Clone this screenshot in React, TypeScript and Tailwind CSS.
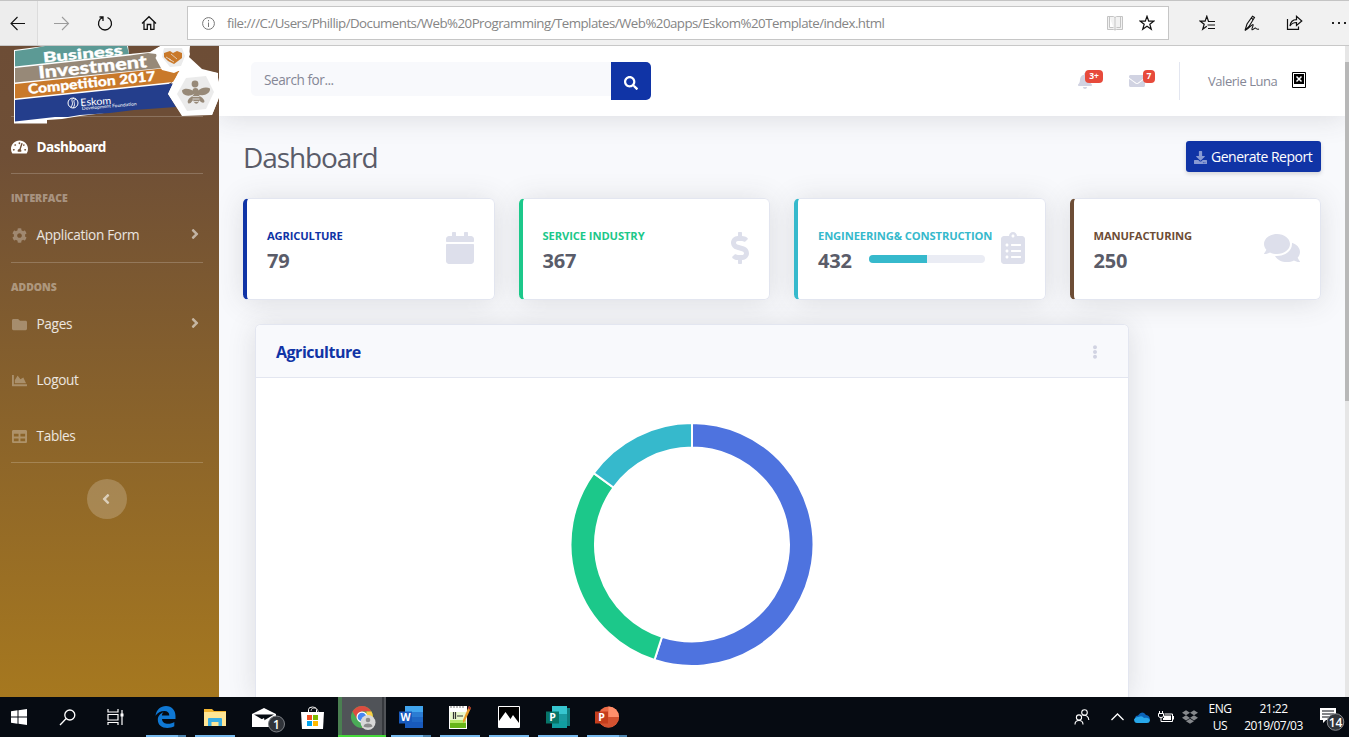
import React from "react";
import {
  FaTachometerAlt, FaCog, FaFolder, FaChartArea, FaTable, FaAngleRight, FaAngleLeft, FaSearch,
  FaBell, FaEnvelope, FaDownload, FaCalendar, FaDollarSign, FaClipboardList, FaComments,
  FaEllipsisV, FaDropbox,
} from "react-icons/fa";

function BrowserBar() {
  return (
    <header className="flex h-[46px] w-full shrink-0 items-center border-t border-b border-t-[#c4c4c4] border-b-[#c8c8c8] bg-[#f1f1f1]">
      <div className="flex h-full w-[38px] items-center border-r border-[#dcdcdc] bg-[#ededed] pl-[10px]">
        <svg width="16" height="16" viewBox="0 0 16 16" fill="none" stroke="#111" strokeWidth="1.1"><path d="M15 8.5H1M7.5 2L1 8.5L7.5 15" /></svg>
      </div>
      <svg className="ml-[15px]" width="17" height="16" viewBox="0 0 17 16" fill="none" stroke="#9c9c9c" strokeWidth="1.1"><path d="M1 8.5H15.500M9 2L15.500 8.5L9 15" /></svg>
      <svg className="ml-[27px]" width="16" height="17" viewBox="0 0 16 17" fill="none" stroke="#111" strokeWidth="1.3"><path d="M5.500 2.500A6.500 6.500 0 1 0 10.500 2.500M2.500 2H6V6" /></svg>
      <svg className="ml-[28px]" width="16" height="16" viewBox="0 0 16 16" fill="none" stroke="#111" strokeWidth="1.3"><path d="M1 8.500L8 1.700L15 8.500M3 7V14.400H6.300V9.500H9.700V14.400H13V7" /></svg>
      <div className="ml-[30px] flex h-[34px] w-[982px] items-center border border-[#c6c6c6] bg-white">
        <svg className="ml-[14px]" width="13" height="13" viewBox="0 0 13 13" fill="none" stroke="#777" strokeWidth="1"><circle cx="6.500" cy="6.500" r="5.900" /><path d="M6.500 5.500V10M6.500 3V4.300" /></svg>
        <span className="ml-[12px] w-[660px] pt-px text-[13.3px] tracking-[-0.53px] whitespace-nowrap text-[#858585]">
          file:///C:/Users/Phillip/Documents/Web%20Programming/Templates/Web%20apps/Eskom%20Template/index.html
        </span>
        <svg className="ml-auto" width="16" height="16" viewBox="0 0 16 16" fill="#f2f2f2" stroke="#c4c4c4" strokeWidth="1"><path d="M.5 1.500H6.500L8 2.500L9.500 1.500H15.500V14.500H9.500L8 15L6.500 14.500H.5ZM8 2.500V15M2.500 2V12.500H6.500M13.500 2V12.500H9.500" /></svg>
        <svg className="mr-[13px] ml-[16px]" width="16" height="16" viewBox="0 0 16 16" fill="none" stroke="#111" strokeWidth="1.2"><path d="M8 1.300L9.700 6.100H15L10.800 9.200L12.300 14.300L8 11.300L3.700 14.300L5.200 9.200L1 6.100H6.300Z" /></svg>
      </div>
      <svg className="ml-[30px]" width="17" height="16" viewBox="0 0 17 16" fill="none" stroke="#111" strokeWidth="1.2"><path d="M16 6.500H9.500L7.800 1.300L6.100 6.100H1L5.200 9.200L3.700 14.300L7.800 11.300M8.500 10H16M9 13.500H16" /></svg>
      <svg className="ml-[28px]" width="16" height="17" viewBox="0 0 16 17" fill="none" stroke="#111" strokeWidth="1.100"><path d="M1 15.500L3 9L8.500 1.200L10.500 2.500L5 11.500L1 15.500M7.500 2.500L9 5M1 15.500C5 14 8 9 9 9.500C10 10.300 7 14 8 14.700C9 15.300 10.500 12.500 11.500 13C12 13.500 12.500 14.800 15 14" /></svg>
      <svg className="ml-[26px]" width="17" height="16" viewBox="0 0 17 16" fill="none" stroke="#111" strokeWidth="1.2"><path d="M1.500 4V14.300H12.500V11.500M4 11C4.500 7 7 4.600 10.500 4.600V1.300L15.800 6L10.500 10.500V7.500C7.500 7.500 5.500 8.500 4 11Z" /></svg>
      <svg className="ml-[28px]" width="17" height="4" viewBox="0 0 17 4" fill="#222"><rect x="1" y="1" width="2" height="2" /><rect x="7" y="1" width="2" height="2" /><rect x="13" y="1" width="2" height="2" /></svg>
    </header>
  );
}

function CompetitionLogo() {
  return (
    <svg className="absolute top-0 left-0" width="219" height="80" viewBox="0 46 219 80" fontFamily="Lato, sans-serif" fontWeight="900" fill="#fff">
      <path d="M14 50L45 46H128L129 54L150 52L160 46H190L189 57L202 69L218 73V100L212 115H183L168 102L120 107L112 112L80 116L62 119L47 120V123.500H14Z" fill="#fff" />
      <path d="M15 51L30 49L45 46H127L129 54L15 66.500Z" fill="#5c9a95" />
      <path d="M129 46H160L150 51L136 52L129 54Z" fill="#6d4d36" />
      <path d="M15 68L130 55.500L148 53L156 54L162 68L15 82.500Z" fill="#978978" />
      <path d="M15 84L162 68.500L180 71L173 82L15 98.500Z" fill="#c9792a" />
      <path d="M172 82L168 94L182 115L130 115L130 106Z" fill="#6d4d36" />
      <path d="M15 100L173 83.500L168 94L176 107L134 110L110 113L80 115L68 117L55 117L15 121.500Z" fill="#243e8c" />
      <path d="M161 46H187L190 54L185 68L174 73L162 70L155.500 58Z" fill="#fff" />
      <path d="M164 48H182L185 56L181 66L170 67L162 57Z" fill="#ebebeb" />
      <path d="M164 53L170 51L173 53L177 51L182 53V58L174 64L168 61L164 57Z" fill="#c9792a" />
      <path d="M166 57L171 60M171 54L177 59M169 59L174 62" stroke="#ebebeb" strokeWidth=".7" />
      <path d="M178 73L189 58L202 70L217 73L219 82V98L212 115L182 116L168 94Z" fill="#fff" />
      <path d="M186 78L206 76L214 92L206 109L187 111L177 94Z" fill="#ebebeb" />
      <g fill="#978978">
        <circle cx="195" cy="84" r="3.400" />
        <path d="M194.500 92C190 88 184 88 182 90.500C182 95 188 97.500 194 94Z" />
        <path d="M196.500 92C201 87 207 86.500 210 88.500C210.500 94 203 97 197 94Z" />
        <path d="M194 95C188 98 186.500 102 188.500 103.500C191 104 193.500 100 195 95.500Z" />
        <path d="M197 95C203 97 205.500 101 204 102.500C201 103.500 198 99.500 196.500 95.500Z" />
        <ellipse cx="196.300" cy="98" rx="3.400" ry="5.800" />
        <ellipse cx="195.500" cy="91" rx="3" ry="3" />
      </g>
      <path d="M192.500 96.500H199.500M192.500 99H199.500M193.500 101.500H198.500" stroke="#ebebeb" strokeWidth=".8" />
      <text x="0" y="0" transform="translate(43.500 62.500) rotate(-5.500)" fontSize="14" stroke="#fff" strokeWidth=".3" textLength="80" lengthAdjust="spacingAndGlyphs">Business</text>
      <text x="0" y="0" transform="translate(39 78.500) rotate(-6)" fontSize="17" stroke="#fff" strokeWidth=".3" textLength="109" lengthAdjust="spacingAndGlyphs">Investment</text>
      <text x="0" y="0" transform="translate(28.500 94) rotate(-6)" fontSize="13.500" stroke="#fff" strokeWidth=".3" textLength="128" lengthAdjust="spacingAndGlyphs">Competition 2017</text>
      <text x="0" y="0" transform="translate(80.500 106) rotate(-4)" fontSize="10" fontWeight="400" textLength="31" lengthAdjust="spacingAndGlyphs">Eskom</text>
      <text x="0" y="0" transform="translate(82 110) rotate(-5)" fontSize="4.500" fontWeight="400" textLength="55" lengthAdjust="spacingAndGlyphs">Development Foundation</text>
      <g fill="none" stroke="#fff"><circle cx="73" cy="103" r="5" /><path d="M74 98C69 100 75 102 71 107M76 99C71 101 77 103 73 108" /></g>
    </svg>
  );
}

function Divider() {
  return <hr className="ml-[11px] h-px w-[192px] shrink-0 border-0 bg-white/20" />;
}

function NavItem({ icon, label, arrow = false, active = false }: { icon: React.ReactNode; label: string; arrow?: boolean; active?: boolean }) {
  return (
    <a className={active ? "flex h-14 items-center pl-[12px] font-bold text-white" : "flex h-14 items-center pl-[12px] text-white/85"}>
      <span className={active ? "w-[24.500px] text-[15.500px] text-white" : "w-[24.500px] text-[15px] text-white/30"}>{icon}</span>
      <span className={active ? "text-[13.600px] tracking-[-0.5px]" : "text-[13.600px] tracking-[-0.32px]"}>{label}</span>
      {arrow && <FaAngleRight className="mr-[16px] mb-[3px] ml-auto size-[16px] text-white/55" />}
    </a>
  );
}

function SideHeading({ children }: { children: React.ReactNode }) {
  return <div className="pl-[11px] text-[10.400px] leading-[16px] font-extrabold text-white/40">{children}</div>;
}

function Sidebar() {
  return (
    <aside className="relative flex w-[219px] shrink-0 flex-col bg-[linear-gradient(180deg,#6d4d36_0px,#6f4f36_110px,#a6781f_650px)]">
      <div className="h-[70px] shrink-0" />
      <Divider />
      <div className="mt-[2px]"><NavItem active icon={<FaTachometerAlt className="-ml-px h-[16px] w-[17px]" />} label="Dashboard" /></div>
      <div className="-mt-[2px]"><Divider /></div>
      <div className="mt-[16px]"><SideHeading>INTERFACE</SideHeading></div>
      <div className="mt-px"><NavItem arrow icon={<FaCog />} label="Application Form" /></div>
      <div className="-mt-px"><Divider /></div>
      <div className="mt-[16px]"><SideHeading>ADDONS</SideHeading></div>
      <div className="mt-px"><NavItem arrow icon={<FaFolder />} label="Pages" /></div>
      <NavItem icon={<FaChartArea />} label="Logout" />
      <NavItem icon={<FaTable />} label="Tables" />
      <div className="-mt-[2px]"><Divider /></div>
      <button className="mt-4 ml-[87px] flex size-10 items-center justify-center rounded-full bg-white/20 pr-[2px] text-white/60"><FaAngleLeft className="size-[16px]" /></button>
      <CompetitionLogo />
    </aside>
  );
}

function TopBar() {
  return (
    <div className="relative z-10 flex h-[70px] shrink-0 items-center bg-white pr-[39px] pl-8 shadow-[0_2px_28px_rgba(58,59,69,0.15)]">
      <div className="flex h-[38px] w-[400px]">
        <div className="flex h-[34px] w-[360px] items-center rounded-l-[5px] bg-[#f8f9fc] pt-[3px] pl-[13px] text-[13.600px] tracking-[-0.45px] text-[#858796]">Search for...</div>
        <button className="flex w-10 items-center justify-center rounded-r-[5px] bg-[#1034a6] pt-[3px] text-white"><FaSearch className="size-[14px]" /></button>
      </div>
      <div className="relative ml-[426px] flex size-4 items-center justify-center text-[#d1d3e2]">
        <FaBell className="size-4" />
        <span className="absolute -top-[3px] left-[8px] flex h-[13px] w-[18px] items-center justify-center rounded-[4px] bg-[#e74a3b] text-[8.500px] font-bold text-white">3+</span>
      </div>
      <div className="relative ml-[36px] flex size-4 items-center justify-center text-[#d1d3e2]">
        <FaEnvelope className="size-4" />
        <span className="absolute -top-[3px] left-[14px] flex h-[13px] w-[12px] items-center justify-center rounded-[4px] bg-[#e74a3b] text-[8.500px] font-bold text-white">7</span>
      </div>
      <div className="ml-[34px] h-[38px] w-px bg-[#e3e6f0]" />
      <span className="mt-[2px] ml-[28px] w-[84px] text-[13px] tracking-[-0.450px] whitespace-nowrap text-[#858796]">Valerie Luna</span>
      <svg className="mb-[2px] shrink-0" width="14" height="16" viewBox="0 0 14 16"><path d="M.5.500H13.500V15.500H.5Z" fill="#fff" stroke="#000" /><path d="M2 2H12V12H2Z" fill="#000" /><path d="M4.500 4.500L9.500 9.500M9.500 4.500L4.500 9.500" stroke="#fff" strokeWidth="1.500" /></svg>
    </div>
  );
}

function StatCard({ bar, color, title, value, icon, progress = false }: { bar: string; color: string; title: string; value: string; icon: React.ReactNode; progress?: boolean }) {
  return (
    <div className="flex h-[102px] flex-1 overflow-visible rounded-[5.600px] bg-white shadow-[0_2px_28px_rgba(58,59,69,0.15)]">
      <div className={"flex w-full items-center rounded-[5.600px] border border-l-4 border-y-[#e3e6f0] border-r-[#e3e6f0] pr-[20px] pb-[2px] pl-[20px] " + bar}>
        <div className="min-w-0 flex-1 pt-[4px]">
          <div className={"mb-[5px] text-[11.200px] leading-[17px] font-bold whitespace-nowrap " + color}>{title}</div>
          <div className="flex items-center">
            <span className="text-[20px] leading-[24px] font-bold tracking-[-0.200px] text-[#5a5c69]">{value}</span>
            {progress && <span className="mb-[5px] ml-[17px] flex h-2 w-[116px] overflow-hidden rounded-[4px] bg-[#eaecf4]"><span className="w-1/2 bg-[#36b9cc]" /></span>}
          </div>
        </div>
        <span className="shrink-0 text-[#dddfeb]">{icon}</span>
      </div>
    </div>
  );
}

const segments = [
  { share: 55, start: 0, color: "#4e73df" },
  { share: 30, start: 55, color: "#1cc88a" },
  { share: 15, start: 85, color: "#36b9cc" },
];

function Donut() {
  const point = (share: number, radius: number) => {
    const a = (share / 100) * Math.PI * 2 - Math.PI / 2;
    return `${122 + radius * Math.cos(a)} ${121.5 + radius * Math.sin(a)}`;
  };
  return (
    <svg width="244" height="243" viewBox="0 0 244 243">
      {segments.map((s) => {
        const end = s.start + s.share;
        const large = s.share > 50 ? 1 : 0;
        return <path key={s.color} fill={s.color} stroke="#fff" strokeWidth="2" d={`M${point(s.start, 121.5)}A121.5 121.5 0 ${large} 1 ${point(end, 121.5)}L${point(end, 97)}A97 97 0 ${large} 0 ${point(s.start, 97)}Z`} />;
      })}
    </svg>
  );
}

function Content() {
  return (
    <section className="flex min-h-0 flex-1 flex-col px-6 pt-6">
      <div className="flex h-[34px] items-center justify-between">
        <h1 className="text-[28px] font-normal tracking-[-1.100px] text-[#5a5c69]">Dashboard</h1>
        <button className="mb-px flex h-[31px] w-[135px] items-center rounded-[3px] bg-[#1034a6] pl-[8px] text-[14px] tracking-[-0.500px] whitespace-nowrap text-white shadow-[0_2px_4px_rgba(58,59,69,0.2)]">
          <FaDownload className="mt-[2px] mr-[4px] size-[13px] text-white/50" />Generate Report
        </button>
      </div>
      <div className="mt-6 flex gap-6">
        <StatCard bar="border-l-[#1034a6]" color="text-[#1034a6] tracking-[-0.160px]" title="AGRICULTURE" value="79" icon={<FaCalendar className="-mr-[2px] size-8" />} />
        <StatCard bar="border-l-[#1cc88a]" color="text-[#1cc88a] tracking-[-0.100px]" title="SERVICE INDUSTRY" value="367" icon={<FaDollarSign className="-mr-[7px] size-8" />} />
        <StatCard bar="border-l-[#36b9cc]" color="text-[#36b9cc] tracking-[-0.120px]" title="ENGINEERING& CONSTRUCTION" value="432" progress icon={<FaClipboardList className="-mr-[4px] size-8" />} />
        <StatCard bar="border-l-[#6d4d36]" color="text-[#6d4d36] tracking-[-0.120px]" title="MANUFACTURING" value="250" icon={<FaComments className="h-8 w-9" />} />
      </div>
      <div className="mt-6 ml-[12px] flex min-h-0 w-[874px] flex-1 flex-col rounded-t-[5.600px] border border-b-0 border-[#e3e6f0] bg-white shadow-[0_2px_28px_rgba(58,59,69,0.15)]">
        <div className="flex h-[53px] shrink-0 items-center justify-between rounded-t-[5px] border-b border-[#e3e6f0] bg-[#f8f9fc] pr-[26px] pl-[20px]">
          <h2 className="pt-[1px] text-[16px] font-bold tracking-[-0.480px] text-[#1034a6]">Agriculture</h2>
          <FaEllipsisV className="mt-px size-[14px] text-[#d1d3e2]" />
        </div>
        <div className="flex justify-center pt-[45px]"><Donut /></div>
      </div>
    </section>
  );
}

function Task({ children, line = "bg-[#76b9ed]", split = false }: { children: React.ReactNode; line?: string; split?: boolean }) {
  return (
    <div className="flex h-10 w-[49px] shrink-0 flex-col items-center">
      <div className="flex h-[38px] items-center justify-center pt-[2px]">{children}</div>
      <div className={"flex h-[2px] w-10 justify-end " + line}>{split && <span className="w-2 bg-[#4d84ae]" />}</div>
    </div>
  );
}

function OfficeIcon({ letter, dark, mid, light, round = false }: { letter: string; dark: string; mid: string; light: string; round?: boolean }) {
  return (
    <svg width="24" height="22" viewBox="0 0 24 22">
      {round ? (
        <><circle cx="13.500" cy="11" r="10.500" fill={mid} /><path d="M13.500.5A10.500 10.500 0 0 1 24 11H13.500Z" fill={light} /><path d="M3 11H24A10.500 10.500 0 0 1 3 11Z" fill="#d35230" /></>
      ) : (
        <><path d="M6 0H24V22H6Z" fill={mid} /><path d="M6 0H24V6H6Z" fill={light} /><path d="M6 11H24V16H6Z" fill={dark} opacity=".6" /><path d="M6 16H24V22H6Z" fill={dark} /></>
      )}
      <path d="M0 5.500H13V17.500H0Z" fill={dark} />
      <text x="6.500" y="15.300" textAnchor="middle" fontFamily="Open Sans, sans-serif" fontWeight="700" fontSize="10.500" fill="#fff">{letter}</text>
    </svg>
  );
}

function PublisherIcon() {
  return (
    <svg width="24" height="22" viewBox="0 0 24 22">
      <path d="M14 2H24V20H14Z" fill="#0f7d7e" />
      <path d="M6 0H21V22H6Z" fill="#1a9ba1" />
      <path d="M6 0H21V8H6Z" fill="#37c6d0" />
      <path d="M6 15H21V22H6Z" fill="#119da0" />
      <path d="M0 5.500H13V17.500H0Z" fill="#077568" />
      <text x="6.500" y="15.300" textAnchor="middle" fontFamily="Open Sans, sans-serif" fontWeight="700" fontSize="10.500" fill="#fff">P</text>
    </svg>
  );
}

function Taskbar() {
  return (
    <footer className="flex h-10 shrink-0 items-center bg-[#060b12] text-white">
      <div className="flex w-[43px] pl-[11px]"><svg width="16" height="16" viewBox="0 0 16 16" fill="#fff"><path d="M0 2.300L6.500 1.300V7.500H0ZM7.500 1.200L16 0V7.500H7.500ZM0 8.500H6.500V14.700L0 13.700ZM7.500 8.500H16V16L7.500 14.800Z" /></svg></div>
      <div className="flex w-[48px] justify-center"><svg width="17" height="17" viewBox="0 0 17 17" fill="none" stroke="#fff" strokeWidth="1.300"><circle cx="10.800" cy="6" r="5" /><path d="M7.200 9.500L1 16" /></svg></div>
      <div className="flex w-[50px] justify-center pr-[2px]"><svg width="17" height="16" viewBox="0 0 17 16" fill="none" stroke="#fff" strokeWidth="1.200"><path d="M1 0V3H11V0M1 5.500H11V11H1ZM1 16V13.500H11V16M15 1V16" /><path d="M13.500 4.500H16.500V7.500H13.500Z" fill="#fff" stroke="none" /></svg></div>
      <Task split><svg width="21" height="22" viewBox="0 0 21 22" fill="#0f78d4"><path d="M.5 9.800C1.500 3.500 5.500 0 11 0C17 0 20.500 4.500 20.500 10V13H7C7.200 16.500 10 17.800 13 17.800C15.500 17.800 17.800 17 19.300 16V20.300C17.300 21.500 15 22 12.300 22C6.800 22 2.800 19 2.800 13.800C2.800 10.500 5 7.500 8.500 6.300C7.500 7.300 7 8.300 6.900 9.500H14.300C14.300 6.500 12.500 5 9.500 5C5.500 5 2.500 7 .5 9.800Z" /></svg></Task>
      <Task><svg width="22" height="19" viewBox="0 0 22 19"><path d="M0 1H8L10 3H22V18H0Z" fill="#f2b530" /><path d="M1 4H22V18H0V4Z" fill="#ffe694" /><path d="M4 18V11Q4 10 5 10H17Q18 10 18 11V18H14.500V14H7.500V18Z" fill="#39aee4" /></svg></Task>
      <Task line="bg-transparent"><svg className="overflow-visible" width="24" height="19" viewBox="0 0 24 19"><path d="M0 6L12 0L24 6V19H0Z" fill="#fff" /><path d="M2 6.500H22L12 12.500Z" fill="#060b12" /><path d="M12 10L0 17V19H14Z" fill="#fff" /><circle cx="24.500" cy="16" r="8" fill="#30343a" stroke="#7d8186" strokeWidth="1" /><text x="24.500" y="20.500" textAnchor="middle" fontFamily="Open Sans, sans-serif" fontSize="12" fontWeight="600" fill="#fff">1</text></svg></Task>
      <Task line="bg-transparent"><svg width="23" height="23" viewBox="0 0 23 23"><path d="M0 6H23L22 23H1Z" fill="#fff" /><path d="M7.500 6V3.500Q7.500 1 11.500 1Q15.500 1 15.500 3.500V6" fill="none" stroke="#fff" /><path d="M10 5Q10 2 13 2Q17 2 17.500 6" fill="none" stroke="#aaa" /><path d="M6 9H11V14H6Z" fill="#f25022" /><path d="M12 9H17V14H12Z" fill="#7fba00" /><path d="M6 15H11V20H6Z" fill="#00a4ef" /><path d="M12 15H17V20H12Z" fill="#ffb900" /></svg></Task>
      <div className="ml-px flex h-10 w-[48px] shrink-0 flex-col border-b-2 border-[#45d83a] bg-[linear-gradient(90deg,#4a7f51_0px,#4a7f51_4px,#505358_4px,#505358_44px,#35383d_44px,#35383d_46px,#505358_46px)]">
        <div className="flex h-[38px] items-center justify-center pt-[3px] pl-[3px]">
          <svg width="25" height="24" viewBox="0 0 25 24"><circle cx="11" cy="11" r="11" fill="#4aab57" /><path d="M1.500 5.500A11 11 0 0 1 20.500 5.500H11L6 13Z" fill="#dc4c40" /><path d="M20.500 5.500A11 11 0 0 1 11 22L15.500 13V5.500Z" fill="#fdcd42" /><circle cx="11" cy="11" r="5.500" fill="#fff" /><circle cx="11" cy="11" r="4.300" fill="#4687f3" /><circle cx="17" cy="16.500" r="7.500" fill="#d8d8d8" /><circle cx="17" cy="14" r="2.300" fill="#8b8b8b" /><path d="M12.500 20.500Q13 17.500 17 17.500Q21 17.500 21.500 20.500Q17 22.500 12.500 20.500Z" fill="#8b8b8b" /></svg>
        </div>
      </div>
      <Task split><OfficeIcon letter="W" dark="#185abd" mid="#2b7cd3" light="#41a5ee" /></Task>
      <Task><svg width="22" height="24" viewBox="0 0 22 24"><path d="M0 1H18V24H0Z" fill="#fff" /><path d="M1 9H17V23H1Z" fill="#b5e868" /><path d="M1 7H17V15H1Z" fill="#e9f8cc" /><path d="M1 18H17V23H1Z" fill="#67b519" /><path d="M2 1V3M5 1V3M8 1V3M11 1V3M14 1V3" stroke="#777" /><path d="M4.500 7V14M6.500 7V14M8 11H14" stroke="#333" strokeWidth="1.200" /><path d="M20 1L22 3L16 16L14 18V15Z" fill="#e99d29" /><path d="M20 1L22 3L21 5L19 3Z" fill="#a3282d" /></svg></Task>
      <Task><svg width="22" height="22" viewBox="0 0 22 22"><path d="M.5.500H21.500V21.500H.5Z" fill="#000" stroke="#fff" /><path d="M1 15L7.500 6L12.500 13L15 9L21 17V21H1Z" fill="#fff" /></svg></Task>
      <Task><PublisherIcon /></Task>
      <Task split><OfficeIcon round letter="P" dark="#c43e1c" mid="#ed6c47" light="#ff8f6b" /></Task>
      <div className="ml-auto flex items-center pr-[4px]">
        <svg className="mr-[21px]" width="16" height="16" viewBox="0 0 16 16" fill="none" stroke="#fff" strokeWidth="1.100"><circle cx="10.500" cy="3.500" r="2.800" /><path d="M8.500 6Q14.500 6 14.800 11" /><circle cx="5" cy="8.500" r="2.600" /><path d="M1 15.500Q1 11.500 5 11.500Q9 11.500 9 15.500" /></svg>
        <svg className="mr-[10px]" width="13" height="8" viewBox="0 0 13 8" fill="none" stroke="#fff" strokeWidth="1.300"><path d="M.5 7L6.500 1L12.500 7" /></svg>
        <svg className="mr-[8px]" width="16" height="11" viewBox="0 0 16 11"><path d="M2 7Q0 4 4 3.500Q8 -2 12 3Q16 3.500 16 8L8 10Z" fill="#0b64b8" /><path d="M0 7.500Q1 4.500 4.500 5Q8 3 10 6Q15 5 16 8.500Q15.500 11 13 11H3Q.3 11 0 7.500Z" fill="#28a8ea" /></svg>
        <svg className="mr-[8px]" width="16" height="12" viewBox="0 0 16 12" fill="none" stroke="#fff" strokeWidth="1"><path d="M1.500 0V2.500M4.500 0V2.500M.5 2.500H5.500V5Q5.500 6.500 3 6.500Q.5 6.500.5 5ZM3 6.500V10.500H14.500V3H6.500" /><path d="M6 4.500H13V9H5V7H6Z" fill="#fff" stroke="none" /><path d="M15.500 5V8.500" /></svg>
        <FaDropbox className="mr-[10px] size-[16px] text-[#85888c]" />
        <div className="mr-[12px] w-[24px] text-center text-[12px] leading-[17px] tracking-[-0.400px]"><div>ENG</div><div>US</div></div>
        <div className="mr-[16px] w-[59px] text-center text-[12px] leading-[17px] tracking-[-0.500px] whitespace-nowrap"><div>21:22</div><div>2019/07/03</div></div>
        <svg width="26" height="28" viewBox="0 0 26 28"><path d="M1 5H17V17H7L4 20V17H1Z" fill="#fff" /><path d="M3 8H15M3 11H15M3 14H12" stroke="#060b12" strokeWidth="1.200" /><circle cx="16.500" cy="19" r="8.300" fill="#30343a" stroke="#8a8d91" /><text x="16.500" y="23.500" textAnchor="middle" fontFamily="Open Sans, sans-serif" fontSize="12" fontWeight="600" fill="#fff">14</text></svg>
      </div>
    </footer>
  );
}

export default function App() {
  return (
    <div className="flex h-[737px] w-[1349px] flex-col overflow-hidden bg-[#f8f9fc] font-['Open_Sans','Noto_Sans',sans-serif]">
      <BrowserBar />
      <div className="flex min-h-0 flex-1 overflow-hidden">
        <Sidebar />
        <main className="flex min-w-0 flex-1 flex-col overflow-hidden">
          <TopBar />
          <Content />
        </main>
        <div className="z-20 w-[4px] shrink-0 bg-[#e6e6e6] pt-[16px]"><div className="h-[339px] bg-[#b8b8b8]" /></div>
      </div>
      <Taskbar />
    </div>
  );
}
